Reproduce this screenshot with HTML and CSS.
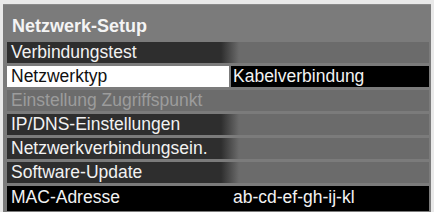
FILE: index.html
```html
<!DOCTYPE html>
<html lang="de">

<head>
  <meta charset="UTF-8">
  <title>Netzwerk-Setup</title>
  <link rel="stylesheet" href="styles.css">
</head>

<body>
  <div class="panel">
    <h2 class="title">Netzwerk-Setup</h2>
    <ul class="menu">
      <li class="row"><span class="label">Verbindungstest</span><span class="value"></span></li>
      <li class="row selected"><span class="label">Netzwerktyp</span><span class="value">Kabelverbindung</span></li>
      <li class="row disabled"><span class="label">Einstellung Zugriffspunkt</span><span class="value"></span></li>
      <li class="row"><span class="label">IP/DNS-Einstellungen</span><span class="value"></span></li>
      <li class="row"><span class="label">Netzwerkverbindungsein.</span><span class="value"></span></li>
      <li class="row"><span class="label">Software-Update</span><span class="value"></span></li>
      <li class="row info"><span class="label">MAC-Adresse</span><span class="value">ab-cd-ef-gh-ij-kl</span></li>
    </ul>
  </div>
</body>

</html>
```

FILE: styles.css
```css
/* Base styles */
body {
  margin: 0;
  padding: 0;
  background-color: #e9e9e9;
  font-family: "Liberation Sans", Arial, sans-serif;
}

.panel {
  display: flex;
  flex-direction: column;
  margin: 4px 3px 0 3px;
  padding: 0 2px 1px 4px;
  height: 208px;
  background-color: #7b7b7b;
  border-top: 1px solid #8a8a8a;
  box-sizing: border-box;
}

.title {
  margin: 0;
  height: 33px;
  padding: 4px 0 0 5px;
  line-height: 34px;
  font-size: 18px;
  font-weight: bold;
  color: #f4f4f4;
}

/* Menu rows */
.menu {
  flex: 1;
  list-style-type: none;
  margin: 0;
  padding: 0;
  display: flex;
  flex-direction: column;
  gap: 3px;
}

.row {
  display: grid;
  grid-template-columns: 222px 1fr;
  column-gap: 2px;
  height: 21px;
  line-height: 21px;
  font-size: 17.5px;
  color: #f2f2f2;
  background: linear-gradient(to right, #2e2e2e 0, #2e2e2e 214px, #6b6b6b 232px, #6b6b6b 100%);
}

.label {
  padding-left: 4px;
  white-space: nowrap;
}

.value {
  padding-left: 2px;
  white-space: nowrap;
}

.selected {
  background: none;
}

.selected .label {
  background-color: #fff;
  color: #111;
}

.selected .value {
  background-color: #000;
}

.disabled {
  background: #6c6c6c;
  color: #9c9c9c;
}

.info {
  flex: 1;
  height: auto;
  line-height: 23px;
  background: #000;
}
```
